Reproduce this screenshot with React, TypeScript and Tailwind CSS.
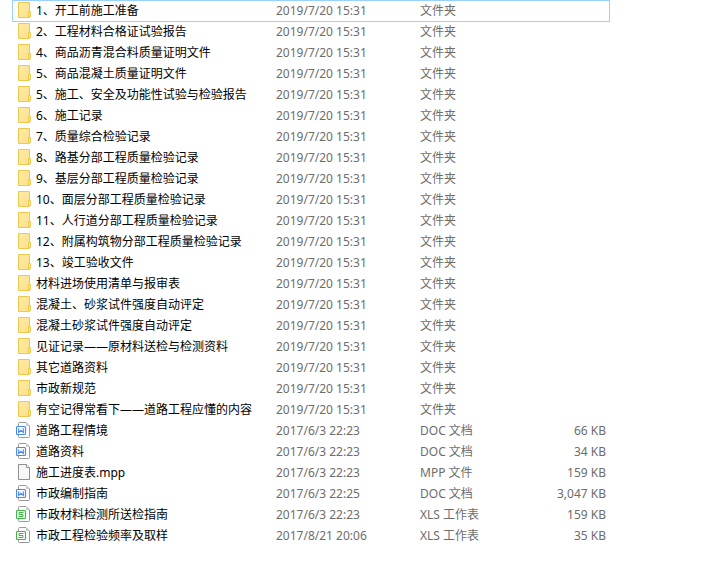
import clsx from "clsx";

type Kind = "folder" | "doc" | "xls" | "file";

type Entry = {
  name: string;
  date: string;
  type: string;
  size?: string;
  kind: Kind;
};

const folderNames = [
  "1、开工前施工准备",
  "2、工程材料合格证试验报告",
  "4、商品沥青混合料质量证明文件",
  "5、商品混凝土质量证明文件",
  "5、施工、安全及功能性试验与检验报告",
  "6、施工记录",
  "7、质量综合检验记录",
  "8、路基分部工程质量检验记录",
  "9、基层分部工程质量检验记录",
  "10、面层分部工程质量检验记录",
  "11、人行道分部工程质量检验记录",
  "12、附属构筑物分部工程质量检验记录",
  "13、竣工验收文件",
  "材料进场使用清单与报审表",
  "混凝土、砂浆试件强度自动评定",
  "混凝土砂浆试件强度自动评定",
  "见证记录——原材料送检与检测资料",
  "其它道路资料",
  "市政新规范",
  "有空记得常看下——道路工程应懂的内容",
];

const files: Entry[] = [
  { name: "道路工程情境", date: "2017/6/3 22:23", type: "DOC 文档", size: "66 KB", kind: "doc" },
  { name: "道路资料", date: "2017/6/3 22:23", type: "DOC 文档", size: "34 KB", kind: "doc" },
  { name: "施工进度表.mpp", date: "2017/6/3 22:23", type: "MPP 文件", size: "159 KB", kind: "file" },
  { name: "市政编制指南", date: "2017/6/3 22:25", type: "DOC 文档", size: "3,047 KB", kind: "doc" },
  { name: "市政材料检测所送检指南", date: "2017/6/3 22:23", type: "XLS 工作表", size: "159 KB", kind: "xls" },
  { name: "市政工程检验频率及取样", date: "2017/8/21 20:06", type: "XLS 工作表", size: "35 KB", kind: "xls" },
];

const entries: Entry[] = [
  ...folderNames.map((name): Entry => ({
    name,
    date: "2019/7/20 15:31",
    type: "文件夹",
    kind: "folder",
  })),
  ...files,
];

function FolderIcon() {
  return (
    <svg viewBox="0 0 16 16" className="mt-px size-4 shrink-0" aria-hidden="true">
      <defs>
        <linearGradient id="folder" x1="0" y1="0" x2="1" y2="1">
          <stop offset="0" stopColor="#ffeba6" />
          <stop offset="1" stopColor="#fbe08a" />
        </linearGradient>
      </defs>
      <path d="M2.5 0.5h11v15h-11z" fill="url(#folder)" stroke="#edc84f" />
      <path d="M12.5 9.5h2v5h-2z" fill="#ffeba6" stroke="#edc84f" />
    </svg>
  );
}

function FileIcon() {
  return (
    <svg viewBox="0 0 16 16" className="mt-px size-4 shrink-0" aria-hidden="true">
      <path d="M2.5 0.5h8l3 3v12h-11z" fill="#f7f7f7" stroke="#8f8f8f" />
      <path d="M10.5 0.5v3h3" fill="#fff" stroke="#8f8f8f" />
    </svg>
  );
}

function OfficeIcon({ kind }: { kind: "doc" | "xls" }) {
  const color = kind === "doc" ? "#4a8af4" : "#3fb54a";

  return (
    <svg viewBox="0 0 16 16" className="mt-px size-4 shrink-0" fill="none" aria-hidden="true">
      <path
        d="M2.5 4V1.5a1 1 0 0 1 1-1H10l3.5 3.5v10.5a1 1 0 0 1-1 1h-9a1 1 0 0 1-1-1V13"
        fill="#fff"
        stroke="#999"
      />
      <path d="M10 1v3h3z" fill="#ccc" />
      <rect x="0.5" y="4.5" width="9" height="8" rx="1" fill="#fff" stroke={color} strokeWidth="1.2" />
      {kind === "doc" ? (
        <path d="M2.7 6.200v4.200L5 8.300l2.300 2.100V6.200" stroke={color} strokeWidth="1.100" />
      ) : (
        <path d="M7.500 6.500H3v2h4v2H2.500" stroke={color} />
      )}
    </svg>
  );
}

function EntryIcon({ kind }: { kind: Kind }) {
  if (kind === "folder") return <FolderIcon />;
  if (kind === "file") return <FileIcon />;
  return <OfficeIcon kind={kind} />;
}

function EntryRow({ entry, focused }: { entry: Entry; focused: boolean }) {
  return (
    <tr className={clsx(focused ? "outline outline-[#99d1ff]" : "*:pt-px")}>
      <td>
        <div className="flex items-start gap-1 pl-[3px] text-black">
          <EntryIcon kind={entry.kind} />
          <span>{entry.name}</span>
        </div>
      </td>
      <td>{entry.date}</td>
      <td>{entry.type}</td>
      <td className="pr-[3px] text-right">{entry.size}</td>
    </tr>
  );
}

export default function App() {
  return (
    <main className="min-h-screen bg-white pt-px pr-[106px] pl-[13px]">
      <table
        aria-label="文件列表"
        className="w-full table-fixed border-collapse font-['Noto_Sans','Noto_Sans_CJK_SC',sans-serif] text-xs leading-5 whitespace-nowrap text-[#6d6d6d]"
      >
        <colgroup>
          <col />
          <col className="w-36" />
          <col className="w-[106px]" />
          <col className="w-[83px]" />
        </colgroup>
        <tbody>
          {entries.map((entry, i) => (
            <EntryRow key={entry.name} entry={entry} focused={i === 0} />
          ))}
        </tbody>
      </table>
    </main>
  );
}
